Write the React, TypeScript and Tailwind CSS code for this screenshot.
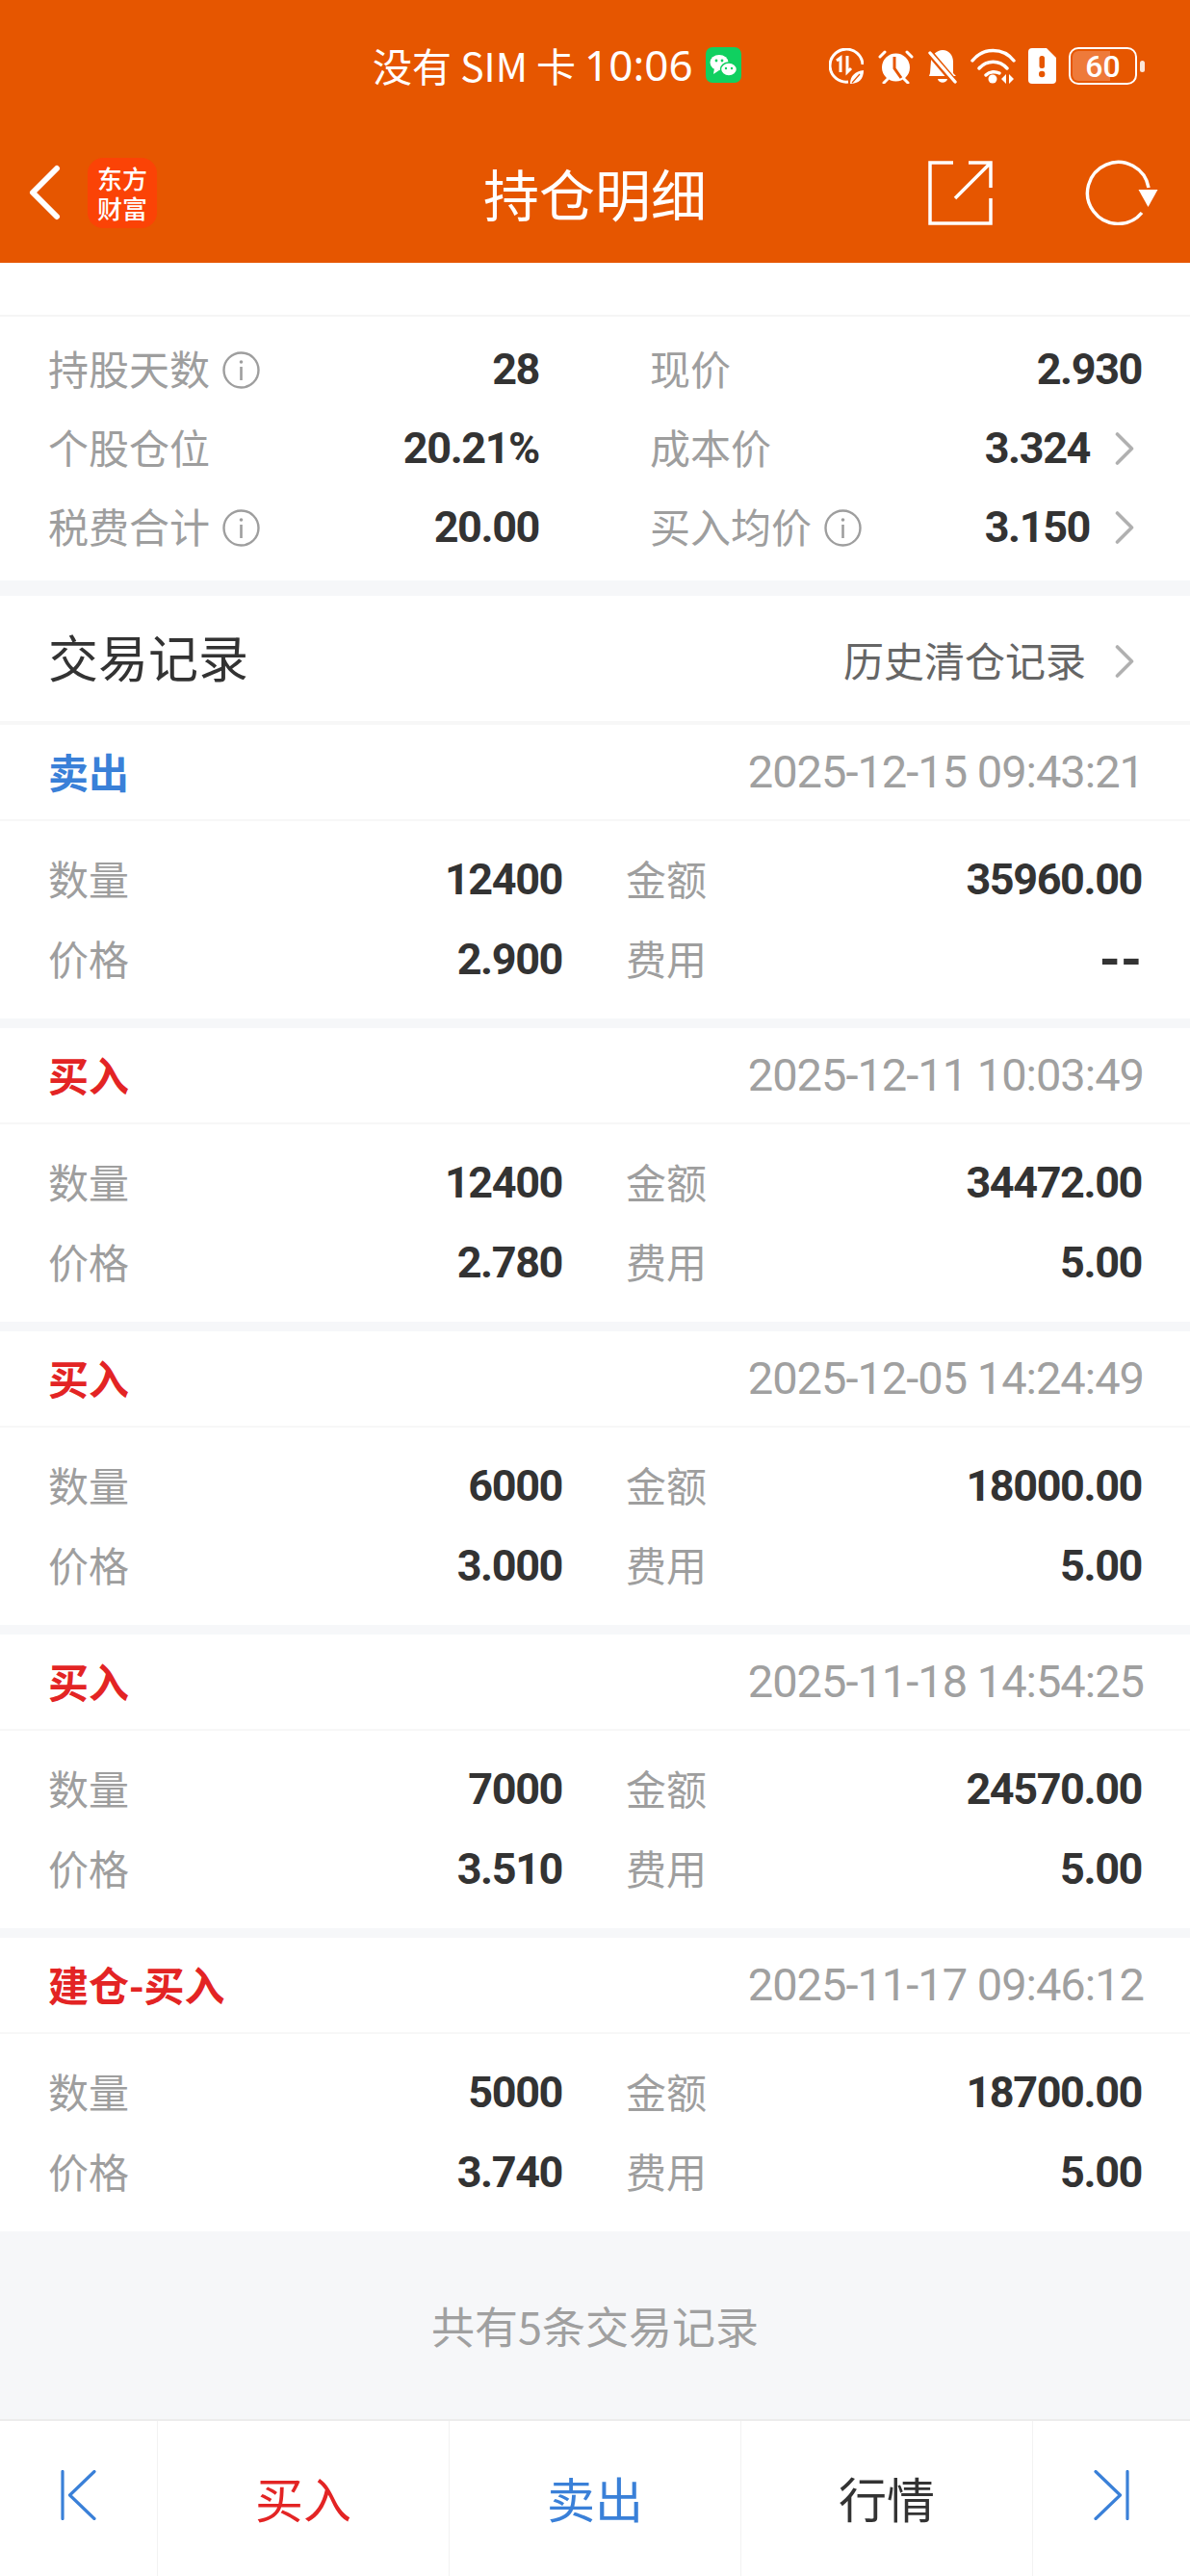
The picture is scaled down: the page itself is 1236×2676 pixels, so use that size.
const Sans = '"Noto Sans CJK SC", "Noto Sans", sans-serif';
const Num = '"Roboto", "Noto Sans CJK SC", sans-serif';

interface Trade {
  type: string;
  time: string;
  qty: string;
  amount: string;
  price: string;
  fee: string;
  sell?: boolean;
}

const trades: Trade[] = [
  { type: '卖出', time: '2025-12-15 09:43:21', qty: '12400', amount: '35960.00', price: '2.900', fee: '--', sell: true },
  { type: '买入', time: '2025-12-11 10:03:49', qty: '12400', amount: '34472.00', price: '2.780', fee: '5.00' },
  { type: '买入', time: '2025-12-05 14:24:49', qty: '6000', amount: '18000.00', price: '3.000', fee: '5.00' },
  { type: '买入', time: '2025-11-18 14:54:25', qty: '7000', amount: '24570.00', price: '3.510', fee: '5.00' },
  { type: '建仓-买入', time: '2025-11-17 09:46:12', qty: '5000', amount: '18700.00', price: '3.740', fee: '5.00' },
];

const Info = () => (
  <svg width="39" height="39" viewBox="0 0 39 39" fill="none" className="ml-[13px] shrink-0">
    <circle cx="19.500" cy="19.500" r="18" stroke="#9e9e9e" strokeWidth="2.400" />
    <circle cx="19.500" cy="11" r="1.800" fill="#9e9e9e" />
    <path d="M19.500 16v14" stroke="#9e9e9e" strokeWidth="2.600" />
  </svg>
);

const Chevron = ({ className }: { className?: string }) => (
  <svg width="20" height="36" viewBox="0 0 20 36" fill="none" className={className}>
    <path d="M2.500 3l15 15-15 15" stroke="#b0b0b0" strokeWidth="3.600" strokeLinecap="round" strokeLinejoin="round" />
  </svg>
);

const StatusIcons = () => (
  <div className="ml-auto flex items-center">
    {/* data saver */}
    <svg width="36" height="37" viewBox="0 0 36 37" fill="none">
      <path d="M20 35A17 17 0 1 1 35 17" stroke="#fff" strokeWidth="3" />
      <path d="M8 13l4-3v15M19 8v17l4-4" stroke="#fff" strokeWidth="3" />
      <path d="M22 37c0-8 5-13 14-14 0 9-5 14-14 14z" fill="#fff" />
      <path d="M24 36l8-9" stroke="#e65600" strokeWidth="1.200" />
    </svg>
    {/* alarm */}
    <svg width="39" height="37" viewBox="0 0 39 37" fill="none" className="ml-[14px]">
      <circle cx="19.500" cy="20" r="14.500" fill="#fff" />
      <path d="M18 9v12l7 10" stroke="#e65600" strokeWidth="3" />
      <path d="M3 9l5-5M36 9l-5-5M7 36l4-4M32 36l-4-4" stroke="#fff" strokeWidth="3" strokeLinecap="round" />
    </svg>
    {/* muted bell */}
    <svg width="32" height="37" viewBox="0 0 32 37" className="ml-[13px]">
      <path d="M16 2c7 0 11 6 11 12v12l3 3H2l1-3 1-13C5 7 10 2 16 2z" fill="#fff" />
      <path d="M11 32c1 5 9 5 10 0z" fill="#fff" />
      <path d="M1 3l28 33" stroke="#e65600" strokeWidth="7" />
      <path d="M3 5l26 30" stroke="#fff" strokeWidth="3.400" strokeLinecap="round" />
    </svg>
    {/* wifi */}
    <svg width="47" height="37" viewBox="0 0 47 37" fill="none" className="ml-[13px]">
      <path d="M2 13C13-1 34-1 45 13M9 21c8-9 21-9 29 0M16 28c4-4 10-4 14-2" stroke="#fff" strokeWidth="3.400" strokeLinecap="round" />
      <circle cx="23" cy="32" r="4.500" fill="#fff" />
      <path d="M37 27l-5 5 5 5zM40 27l5 5-5 5z" fill="#fff" />
    </svg>
    {/* sim alert */}
    <svg width="29" height="37" viewBox="0 0 29 37" className="ml-[13px]">
      <path d="M4 0h15l10 10v23a4 4 0 0 1-4 4H4a4 4 0 0 1-4-4V4a4 4 0 0 1 4-4z" fill="#fff" />
      <rect x="11.500" y="8" width="5.500" height="13" rx="2.500" fill="#e65600" />
      <circle cx="14.200" cy="27" r="3.200" fill="#e65600" />
    </svg>
    <div className="relative ml-[13px] flex h-[39px] w-[71px] items-center justify-center overflow-hidden rounded-[10px] border-[2px] border-white">
      <div className="absolute inset-y-[2px] left-[2px] w-[39px] rounded-l-[6px] bg-[#ee7a3a]" />
      <span className="relative text-[32px] font-medium leading-none text-white" style={{ fontFamily: Num }}>60</span>
    </div>
    <div className="ml-[3px] h-[12px] w-[5px] rounded-full bg-white/85" />
  </div>
);

function StatusBar() {
  return (
    <div className="flex h-[100px] items-start pl-[387px] pr-[47px] pt-[49px] text-white">
      <div className="flex h-[37px] items-center">
        <span className="whitespace-nowrap text-[41px] leading-[37px]">没有 SIM 卡</span>
        <span className="ml-[9px] text-[44px] leading-[37px]" style={{ fontFamily: '"Noto Sans", sans-serif' }}>10:06</span>
        <svg width="37" height="37" viewBox="0 0 37 37" className="ml-[13px]">
          <rect width="37" height="37" rx="7" fill="#10d060" />
          <ellipse cx="14" cy="16" rx="9.500" ry="8" fill="#fff" />
          <path d="M9 22l-1 6 6-4z" fill="#fff" />
          <ellipse cx="24" cy="23" rx="8.500" ry="7" fill="#fff" stroke="#10d060" strokeWidth="1.500" />
          <circle cx="11" cy="14" r="1.400" fill="#10d060" />
          <circle cx="17" cy="14" r="1.400" fill="#10d060" />
          <circle cx="21" cy="22" r="1.200" fill="#10d060" />
          <circle cx="27" cy="22" r="1.200" fill="#10d060" />
        </svg>
      </div>
      <StatusIcons />
    </div>
  );
}

function NavBar() {
  return (
    <div className="grid h-[173px] grid-cols-[1fr_auto_1fr] items-center pt-[27px] text-white">
      <div className="flex items-center">
        <svg width="33" height="58" viewBox="0 0 33 58" fill="none" className="ml-[30px]">
          <path d="M29 4L4 29l25 25" stroke="#fff" strokeWidth="6" strokeLinecap="round" strokeLinejoin="round" />
        </svg>
        <div className="ml-[28px] flex h-[73px] w-[72px] items-center justify-center rounded-[16px] bg-[#fb4306]">
          <span className="w-[52px] text-center text-[26px] font-medium leading-[31px] text-white">东方财富</span>
        </div>
      </div>
      <div className="text-[58px] leading-[76px]">持仓明细</div>
      <div className="flex items-center justify-end">
        <svg width="67" height="67" viewBox="0 0 67 67" fill="none">
          <path d="M26 2H2v63h63V39M42 2h23v26M64 3L28 39" stroke="#fff" strokeWidth="3.500" />
        </svg>
        <svg width="76" height="68" viewBox="0 0 76 68" fill="none" className="ml-[96px] mr-[33px]">
          <path d="M59 55A32 32 0 1 1 66 29" stroke="#fff" strokeWidth="3.500" />
          <path d="M55.500 31h20l-10 18z" fill="#fff" />
        </svg>
      </div>
    </div>
  );
}

function StatRow({ label, value, info, chevron }: { label: string; value: string; info?: boolean; chevron?: boolean }) {
  return (
    <div className="flex items-center">
      <span className="mb-[4px] text-[42px] leading-[78px] text-[#9e9e9e]">{label}</span>
      {info && <Info />}
      <span className="ml-auto text-[45px] font-bold leading-[82px] tracking-[-1.4px] text-[#333]" style={{ fontFamily: Num }}>{value}</span>
      {chevron ? <Chevron className="ml-[26px] mr-[8px]" /> : null}
    </div>
  );
}

function Summary() {
  const left = [
    { label: '持股天数', value: '28', info: true },
    { label: '个股仓位', value: '20.21%' },
    { label: '税费合计', value: '20.00', info: true },
  ];
  const right = [
    { label: '现价', value: '2.930' },
    { label: '成本价', value: '3.324', chevron: true },
    { label: '买入均价', value: '3.150', info: true, chevron: true },
  ];
  return (
    <div className="flex border-t-[2px] border-[#f5f5f5] bg-white pb-[14px] pl-[50px] pr-[50px] pt-[14px]">
      <div className="w-[510px]">
        {left.map((r) => <StatRow key={r.label} {...r} />)}
      </div>
      <div className="ml-[115px] flex-1">
        {right.map((r) => <StatRow key={r.label} {...r} />)}
      </div>
    </div>
  );
}

function TradeCell({ label, value, wide }: { label: string; value: string; wide?: boolean }) {
  const size = value === '--' ? 'text-[56px]' : 'text-[45px] tracking-[-1.4px]';
  return (
    <div className={`flex items-center ${wide ? 'ml-[66px] flex-1' : 'w-[534px]'}`}>
      <span className="mb-[5px] text-[42px] leading-[78px] text-[#9e9e9e]">{label}</span>
      <span className={`ml-auto mb-[1px] font-bold leading-[82px] text-[#333] ${size}`} style={{ fontFamily: Num }}>{value}</span>
    </div>
  );
}

function TradeCard({ t }: { t: Trade }) {
  return (
    <div className="mb-[10px] bg-white last:mb-0">
      <div className="flex h-[100px] items-center justify-between border-b-[2px] border-[#f7f7f7] px-[50px]">
        <span className={`mb-[3px] text-[42px] font-bold leading-[60px] ${t.sell ? 'text-[#3a80d8]' : 'text-[#e32424]'}`}>{t.type}</span>
        <span className="mr-[-2px] text-[47px] tracking-[-1px] text-[#a0a0a0]" style={{ fontFamily: Num }}>{t.time}</span>
      </div>
      <div className="px-[50px] pb-[19px] pt-[20px]">
        <div className="flex">
          <TradeCell label="数量" value={t.qty} />
          <TradeCell label="金额" value={t.amount} wide />
        </div>
        <div className="flex">
          <TradeCell label="价格" value={t.price} />
          <TradeCell label="费用" value={t.fee} wide />
        </div>
      </div>
    </div>
  );
}

function BottomBar() {
  const Cell = ({ text, color }: { text: string; color: string }) => (
    <div className={`flex w-[303px] items-center justify-center border-r-[1px] border-[#f2f2f2] pb-[3px] text-[50px] ${color}`}>{text}</div>
  );
  return (
    <div className="flex h-[163px] border-t-[2px] border-[#ececec] bg-white">
      <div className="flex w-[164px] items-center justify-center border-r-[1px] border-[#f2f2f2] pb-[7px]">
        <svg width="37" height="52" viewBox="0 0 37 52" fill="none">
          <path d="M2 1.500v49M35 1.500L9.500 26 35 50.500" stroke="#3a80d8" strokeWidth="3.200" strokeLinecap="round" strokeLinejoin="round" />
        </svg>
      </div>
      <Cell text="买入" color="text-[#e32424]" />
      <Cell text="卖出" color="text-[#3a80d8]" />
      <Cell text="行情" color="text-[#333]" />
      <div className="flex flex-1 items-center justify-center pb-[7px]">
        <svg width="37" height="52" viewBox="0 0 37 52" fill="none">
          <path d="M35 1.500v49M2 1.500L27.500 26 2 50.500" stroke="#3a80d8" strokeWidth="3.200" strokeLinecap="round" strokeLinejoin="round" />
        </svg>
      </div>
    </div>
  );
}

export default function App() {
  return (
    <div className="flex h-[2676px] w-[1236px] flex-col overflow-hidden bg-[#f6f7f9]" style={{ fontFamily: Sans }}>
      <div className="h-[273px] bg-[#e65600]">
        <StatusBar />
        <NavBar />
      </div>
      <div className="h-[54px] bg-white" />
      <Summary />
      <div className="mt-[16px] flex h-[134px] items-center justify-between border-b-[4px] border-[#f7f7f7] bg-white px-[50px]">
        <span className="mb-[5px] text-[52px] leading-[70px] text-[#333]">交易记录</span>
        <div className="mt-[6px] flex items-center">
          <span className="mb-[4px] text-[42px] leading-[50px] text-[#666]">历史清仓记录</span>
          <Chevron className="ml-[30px] mr-[8px]" />
        </div>
      </div>
      <div>
        {trades.map((t) => <TradeCard key={t.time} t={t} />)}
      </div>
      <div className="flex flex-1 items-center justify-center text-[45px] text-[#a0a0a0]">共有5条交易记录</div>
      <BottomBar />
    </div>
  );
}
